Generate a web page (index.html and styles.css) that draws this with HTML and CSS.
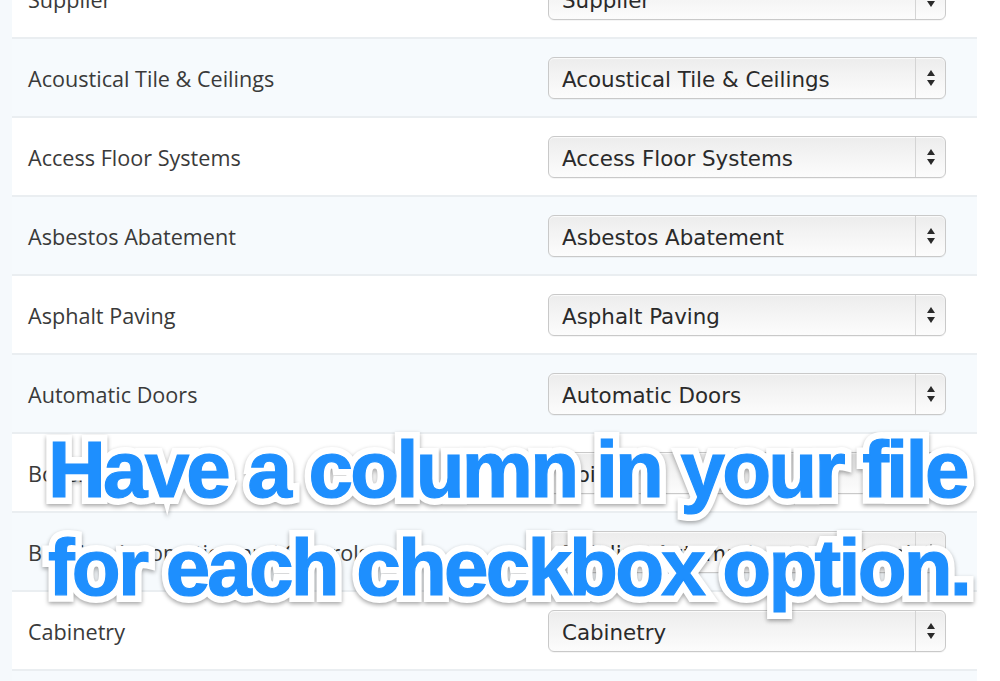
FILE: index.html
```html
<!DOCTYPE html>
<html>
<head>
<meta charset="utf-8">
<link rel="stylesheet" href="styles.css">
</head>
<body>
<div class="page">
  <div class="table">
    <div class="row plain"><div class="label">Supplier</div><div class="select"><span class="val">Supplier</span><span class="arrows"><i class="up"></i><i class="down"></i></span></div></div>
    <div class="row tint"><div class="label">Acoustical Tile &amp; Ceilings</div><div class="select"><span class="val">Acoustical Tile &amp; Ceilings</span><span class="arrows"><i class="up"></i><i class="down"></i></span></div></div>
    <div class="row plain"><div class="label">Access Floor Systems</div><div class="select"><span class="val">Access Floor Systems</span><span class="arrows"><i class="up"></i><i class="down"></i></span></div></div>
    <div class="row tint"><div class="label">Asbestos Abatement</div><div class="select"><span class="val">Asbestos Abatement</span><span class="arrows"><i class="up"></i><i class="down"></i></span></div></div>
    <div class="row plain"><div class="label">Asphalt Paving</div><div class="select"><span class="val">Asphalt Paving</span><span class="arrows"><i class="up"></i><i class="down"></i></span></div></div>
    <div class="row tint"><div class="label">Automatic Doors</div><div class="select"><span class="val">Automatic Doors</span><span class="arrows"><i class="up"></i><i class="down"></i></span></div></div>
    <div class="row plain"><div class="label">Boilers</div><div class="select"><span class="val">Boilers</span><span class="arrows"><i class="up"></i><i class="down"></i></span></div></div>
    <div class="row tint"><div class="label">Building Automation and Controls</div><div class="select"><span class="val">Building Automation and Controls</span><span class="arrows"><i class="up"></i><i class="down"></i></span></div></div>
    <div class="row plain"><div class="label">Cabinetry</div><div class="select"><span class="val">Cabinetry</span><span class="arrows"><i class="up"></i><i class="down"></i></span></div></div>
    <div class="row tint"><div class="label">Carpentry</div><div class="select"><span class="val">Carpentry</span><span class="arrows"><i class="up"></i><i class="down"></i></span></div></div>
  </div>
</div>
<div class="caption">
  <div class="cap-back">Have a column in your file<br>for each checkbox option.</div>
  <div class="cap-front">Have a column in your file<br>for each checkbox option.</div>
</div>
</body>
</html>
```

FILE: styles.css
```css
html, body {
  margin: 0;
  padding: 0;
  background: #ffffff;
  width: 1000px;
  height: 681px;
  overflow: hidden;
}

.page {
  display: flow-root;
  background: #f5f9fc;
  width: 977px;
  padding-left: 12px;
  box-sizing: border-box;
  height: 681px;
  overflow: hidden;
}

.table {
  margin-top: -40px;
  width: 965px;
}

.row {
  height: 79px;
  box-sizing: border-box;
  border-bottom: 2px solid #eaeef1;
  display: grid;
  grid-template-columns: 1fr 398px;
  align-items: center;
  padding: 0 31px 0 16px;
}

.row.plain { background: #ffffff; }
.row.tint { background: #f6fafd; }

.label {
  font-family: "Open Sans", sans-serif;
  font-size: 21.6px;
  color: #3a3a3a;
  white-space: nowrap;
  padding-top: 2px;
}

.select {
  height: 42px;
  box-sizing: border-box;
  border: 1px solid #c9c9c9;
  border-radius: 6px;
  background: linear-gradient(#ececec, #f3f3f3 40%, #fcfcfc);
  box-shadow: inset 0 1px 1px rgba(255,255,255,0.8), 0 1px 0 rgba(0,0,0,0.04);
  display: flex;
  align-items: center;
  overflow: hidden;
}

.val {
  flex: 1;
  font-family: "DejaVu Sans", sans-serif;
  font-size: 21.4px;
  color: #2a2a2a;
  padding-left: 13px;
  padding-top: 3px;
  white-space: nowrap;
  overflow: hidden;
}

.arrows {
  width: 29px;
  height: 100%;
  border-left: 1px solid #d4d4d4;
  display: flex;
  flex-direction: column;
  align-items: center;
  justify-content: center;
  gap: 4px;
}

.arrows i {
  display: block;
  width: 0;
  height: 0;
  border-left: 4px solid transparent;
  border-right: 4px solid transparent;
}
.arrows .up { border-bottom: 6px solid #2a2a2a; }
.arrows .down { border-top: 6px solid #2a2a2a; }

.caption {
  position: absolute;
  left: 48px;
  top: 421px;
  display: grid;
  font-family: "Liberation Sans", Arial, sans-serif;
  font-weight: bold;
  font-size: 80px;
  line-height: 98px;
  letter-spacing: -2.8px;
  white-space: nowrap;
}

.cap-back, .cap-front {
  grid-area: 1 / 1;
}

.cap-back {
  color: #ffffff;
  -webkit-text-stroke: 14px #ffffff;
  filter: drop-shadow(0 2px 2px rgba(0,0,0,0.35));
}

.cap-front {
  position: relative;
  z-index: 1;
  color: #1e8ffe;
  -webkit-text-stroke: 1.2px #1e8ffe;
}
```
